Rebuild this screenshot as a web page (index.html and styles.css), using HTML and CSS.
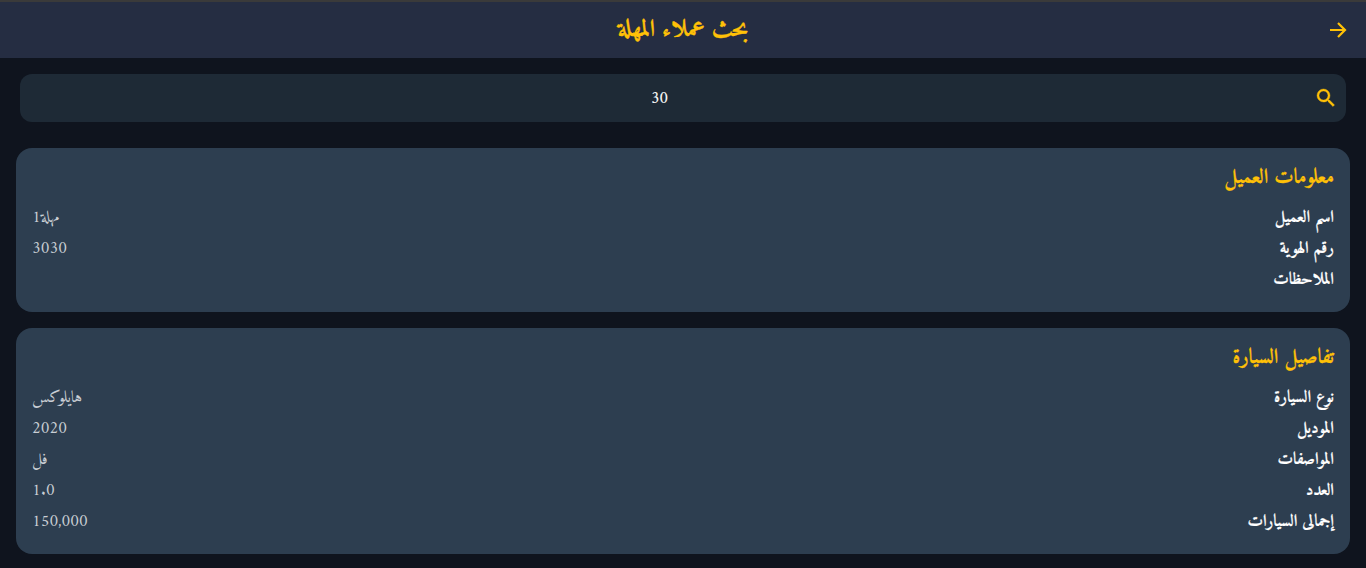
FILE: index.html
```html
<!DOCTYPE html>
<html lang="ar" dir="rtl">
<head>
<meta charset="utf-8">
<title>بحث عملاء المهلة</title>
<link rel="stylesheet" href="styles.css">
</head>
<body>
<header class="topbar">
  <button class="back" type="button" aria-label="رجوع">
    <svg width="24" height="24" viewBox="0 0 24 24"><path d="M4 12h15M12 5l7 7-7 7" fill="none" stroke="#ffc107" stroke-width="2.2"/></svg>
  </button>
  <h1 class="title">بحث عملاء المهلة</h1>
</header>
<main class="content">
  <div class="search">
    <svg class="search-icon" width="24" height="24" viewBox="0 0 24 24"><path fill="#ffc107" stroke="#ffc107" stroke-width="0.4" d="M15.5 14h-.79l-.28-.27A6.47 6.47 0 0 0 16 9.5 6.5 6.5 0 1 0 9.5 16c1.61 0 3.09-.59 4.23-1.57l.27.28v.79l5 4.99L20.49 19l-4.99-5zm-6 0C7.01 14 5 11.99 5 9.5S7.01 5 9.5 5 14 7.01 14 9.5 11.99 14 9.5 14z"/></svg>
    <span class="search-value">30</span>
  </div>
  <section class="card">
    <h2 class="card-title">معلومات العميل</h2>
    <div class="row"><span class="label">اسم العميل</span><span class="value">مهلة1</span></div>
    <div class="row"><span class="label">رقم الهوية</span><span class="value">3030</span></div>
    <div class="row"><span class="label">الملاحظات</span><span class="value"></span></div>
  </section>
  <section class="card">
    <h2 class="card-title">تفاصيل السيارة</h2>
    <div class="row"><span class="label">نوع السيارة</span><span class="value">هايلوكس</span></div>
    <div class="row"><span class="label">الموديل</span><span class="value">2020</span></div>
    <div class="row"><span class="label">المواصفات</span><span class="value">فل</span></div>
    <div class="row"><span class="label">العدد</span><span class="value">1.0</span></div>
    <div class="row"><span class="label">إجمالى السيارات</span><span class="value">150,000</span></div>
  </section>
</main>
</body>
</html>
```
FILE: styles.css
```css
* { box-sizing: border-box; }
html, body { margin: 0; padding: 0; }
body {
  background: #0f141e;
  color: #fff;
  font-family: "Amiri", "Noto Naskh Arabic", "Scheherazade New", "DejaVu Serif", serif;
  height: 568px;
  overflow: hidden;
}
.topbar {
  height: 58px;
  border-top: 2px solid #3a3a3a;
  background: #252d42;
  display: flex;
  align-items: center;
  justify-content: center;
  position: relative;
}
.back {
  position: absolute;
  right: 16px;
  top: 16px;
  width: 24px;
  height: 24px;
  padding: 0;
  border: 0;
  background: none;
  display: flex;
}
.title {
  margin: 0;
  font-size: 24px;
  font-weight: 700;
  color: #ffc107;
  -webkit-text-stroke: 0.3px #ffc107;
}
.content { padding: 16px; }
.search {
  margin: 0 4px 26px;
  height: 48px;
  border-radius: 12px;
  background: #1e2a36;
  display: flex;
  align-items: center;
  padding: 0 8px 0 0;
}
.search-icon { flex: none; }
.search-value { flex: 1; text-align: center; font-size: 16px; padding-right: 15px; padding-top: 2px; -webkit-text-stroke: 0.15px #fff; }
.card {
  background: #2d3e50;
  border-radius: 16px;
  padding: 16px;
  margin-bottom: 16px;
}
.card-title {
  margin: 0 0 12px;
  height: 27px;
  line-height: 29px;
  font-size: 20.8px;
  font-weight: 700;
  color: #ffc107;
  -webkit-text-stroke: 0.25px #ffc107;
}
.row {
  display: flex;
  justify-content: space-between;
  align-items: center;
  height: 31px;
  margin-top: -1px;
  margin-bottom: 1px;
  font-size: 16.8px;
}
.label { font-weight: 700; -webkit-text-stroke: 0.2px #fff; }
.value { color: #c9ced4; font-size: 16.5px; }
```
